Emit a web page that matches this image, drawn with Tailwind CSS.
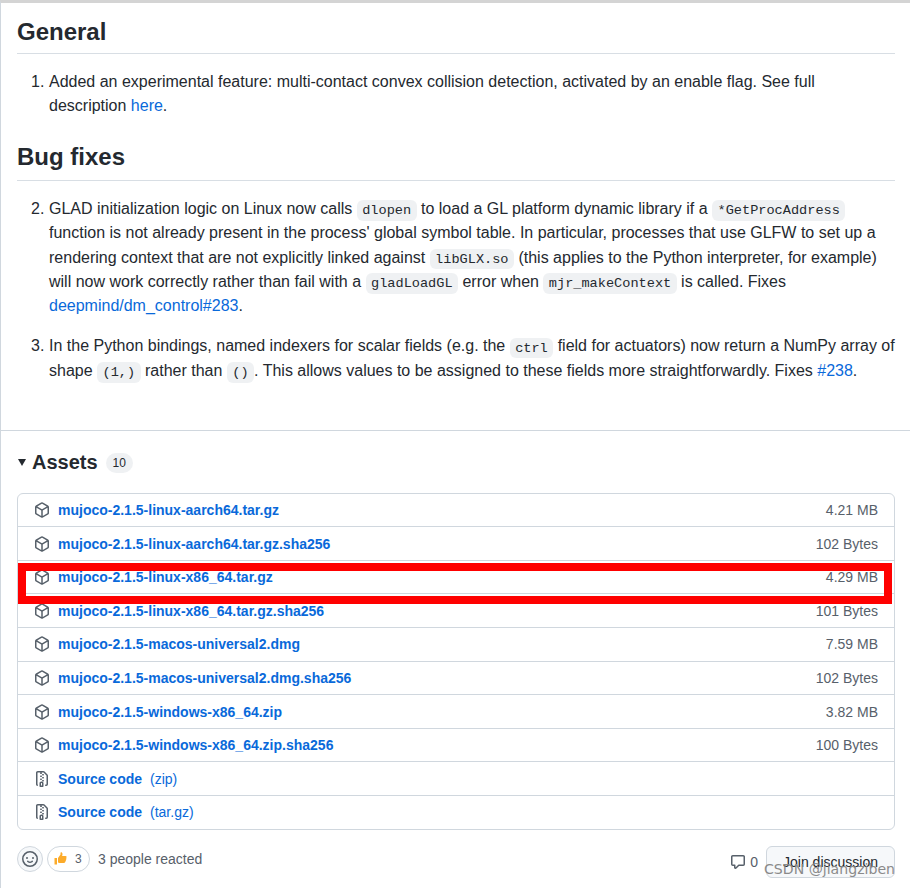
<!DOCTYPE html>
<html lang="en">
<head>
<meta charset="UTF-8">
<title>MuJoCo release</title>
<script src="https://cdn.jsdelivr.net/npm/@tailwindcss/browser@4"></script>
</head>
<body class="bg-white">
<div class="relative w-[910px] h-[888px] overflow-hidden font-['Liberation_Sans',sans-serif] text-[#24292f] text-base leading-6">
  <div class="h-[888px] border-t-[3px] border-t-[#d4d4d4] border-l border-l-[#d0d7de]">
    <div class="pl-4 pr-[15px]">
      <h2 class="mt-[14px] h-[37px] border-b border-[#d8dee4] text-2xl leading-[30px] font-semibold">General</h2>
      <ol class="mt-4 pl-8">
        <li class="relative"><span class="absolute -left-[18px]">1.</span>Added an experimental feature: multi-contact convex collision detection, activated by an enable flag. See full description <a class="text-[#0969da]">here</a>.</li>
      </ol>
      <h2 class="mt-6 h-[39px] border-b border-[#d8dee4] text-2xl leading-[30px] font-semibold">Bug fixes</h2>
      <ol class="mt-4 pl-8 leading-[24.3px]">
        <li class="relative"><span class="absolute -left-[18px]">2.</span>GLAD initialization logic on Linux now calls <code class="rounded-md bg-[#afb8c1]/20 px-[5.44px] py-[2.72px] font-['Liberation_Mono',monospace] text-[13.6px] leading-none">dlopen</code> to load a GL platform dynamic library if a <code class="rounded-md bg-[#afb8c1]/20 px-[5.44px] py-[2.72px] font-['Liberation_Mono',monospace] text-[13.6px] leading-none">*GetProcAddress</code> function is not already present in the process' global symbol table. In particular, processes that use GLFW to set up a rendering context that are not explicitly linked against <code class="rounded-md bg-[#afb8c1]/20 px-[5.44px] py-[2.72px] font-['Liberation_Mono',monospace] text-[13.6px] leading-none">libGLX.so</code> (this applies to the Python interpreter, for example) will now work correctly rather than fail with a <code class="rounded-md bg-[#afb8c1]/20 px-[5.44px] py-[2.72px] font-['Liberation_Mono',monospace] text-[13.6px] leading-none">gladLoadGL</code> error when <code class="rounded-md bg-[#afb8c1]/20 px-[5.44px] py-[2.72px] font-['Liberation_Mono',monospace] text-[13.6px] leading-none">mjr_makeContext</code> is called. Fixes <a class="text-[#0969da]">deepmind/dm_control#283</a>.</li>
        <li class="relative mt-4"><span class="absolute -left-[18px]">3.</span>In the Python bindings, named indexers for scalar fields (e.g. the <code class="rounded-md bg-[#afb8c1]/20 px-[5.44px] py-[2.72px] font-['Liberation_Mono',monospace] text-[13.6px] leading-none">ctrl</code> field for actuators) now return a NumPy array of shape <code class="rounded-md bg-[#afb8c1]/20 px-[5.44px] py-[2.72px] font-['Liberation_Mono',monospace] text-[13.6px] leading-none">(1,)</code> rather than <code class="rounded-md bg-[#afb8c1]/20 px-[5.44px] py-[2.72px] font-['Liberation_Mono',monospace] text-[13.6px] leading-none">()</code>. This allows values to be assigned to these fields more straightforwardly. Fixes <a class="text-[#0969da]">#238</a>.</li>
      </ol>
    </div>
    <div class="mt-[46.9px] border-t border-[#d0d7de] pl-4 pr-[15px]">
      <div class="mt-[18px] flex h-[26px] items-center">
        <svg class="ml-px mr-[6px] mt-px" width="8" height="8" viewBox="0 0 8 8"><path d="M0 1h8L4 8z" fill="#24292f"/></svg>
        <span class="text-xl leading-[26px] font-semibold">Assets</span>
        <span class="ml-2 mt-[3px] rounded-full bg-[#afb8c1]/20 px-[7px] text-xs leading-[20px]">10</span>
      </div>
      <div class="mt-[18px] rounded-md border border-[#d0d7de] text-sm leading-5">
        <div class="flex h-[32.3px] items-center justify-between pb-px pl-4 pr-4">
          <div class="flex items-center gap-2"><svg class="text-[#57606a]" width="16" height="16" viewBox="0 0 16 16" fill="currentColor"><path d="m8.878.392 5.25 3.045c.54.314.872.89.872 1.514v6.098a1.75 1.75 0 0 1-.872 1.514l-5.25 3.045a1.75 1.75 0 0 1-1.756 0l-5.25-3.045A1.75 1.75 0 0 1 1 11.049V4.951c0-.624.332-1.201.872-1.514L7.122.392a1.75 1.75 0 0 1 1.756 0ZM7.875 1.69l-4.63 2.685L8 7.133l4.755-2.758-4.63-2.685a.248.248 0 0 0-.25 0ZM2.5 5.677v5.372c0 .09.047.171.125.216l4.625 2.683V8.432Zm6.25 8.271 4.625-2.683a.25.25 0 0 0 .125-.216V5.677L8.75 8.432Z"/></svg><a class="font-bold text-[#0969da]">mujoco-2.1.5-linux-aarch64.tar.gz</a></div>
          <span class="text-[#57606a]">4.21 MB</span>
        </div>
        <div class="flex h-[33.6px] items-center justify-between border-t border-[#d0d7de] pl-4 pr-4">
          <div class="flex items-center gap-2"><svg class="text-[#57606a]" width="16" height="16" viewBox="0 0 16 16" fill="currentColor"><path d="m8.878.392 5.25 3.045c.54.314.872.89.872 1.514v6.098a1.75 1.75 0 0 1-.872 1.514l-5.25 3.045a1.75 1.75 0 0 1-1.756 0l-5.25-3.045A1.75 1.75 0 0 1 1 11.049V4.951c0-.624.332-1.201.872-1.514L7.122.392a1.75 1.75 0 0 1 1.756 0ZM7.875 1.69l-4.63 2.685L8 7.133l4.755-2.758-4.63-2.685a.248.248 0 0 0-.25 0ZM2.5 5.677v5.372c0 .09.047.171.125.216l4.625 2.683V8.432Zm6.25 8.271 4.625-2.683a.25.25 0 0 0 .125-.216V5.677L8.75 8.432Z"/></svg><a class="font-bold text-[#0969da]">mujoco-2.1.5-linux-aarch64.tar.gz.sha256</a></div>
          <span class="text-[#57606a]">102 Bytes</span>
        </div>
        <div class="flex h-[33.6px] items-center justify-between border-t border-[#d0d7de] pl-4 pr-4">
          <div class="flex items-center gap-2"><svg class="text-[#57606a]" width="16" height="16" viewBox="0 0 16 16" fill="currentColor"><path d="m8.878.392 5.25 3.045c.54.314.872.89.872 1.514v6.098a1.75 1.75 0 0 1-.872 1.514l-5.25 3.045a1.75 1.75 0 0 1-1.756 0l-5.25-3.045A1.75 1.75 0 0 1 1 11.049V4.951c0-.624.332-1.201.872-1.514L7.122.392a1.75 1.75 0 0 1 1.756 0ZM7.875 1.69l-4.63 2.685L8 7.133l4.755-2.758-4.63-2.685a.248.248 0 0 0-.25 0ZM2.5 5.677v5.372c0 .09.047.171.125.216l4.625 2.683V8.432Zm6.25 8.271 4.625-2.683a.25.25 0 0 0 .125-.216V5.677L8.75 8.432Z"/></svg><a class="font-bold text-[#0969da]">mujoco-2.1.5-linux-x86_64.tar.gz</a></div>
          <span class="text-[#57606a]">4.29 MB</span>
        </div>
        <div class="flex h-[33.6px] items-center justify-between border-t border-[#d0d7de] pl-4 pr-4">
          <div class="flex items-center gap-2"><svg class="text-[#57606a]" width="16" height="16" viewBox="0 0 16 16" fill="currentColor"><path d="m8.878.392 5.25 3.045c.54.314.872.89.872 1.514v6.098a1.75 1.75 0 0 1-.872 1.514l-5.25 3.045a1.75 1.75 0 0 1-1.756 0l-5.25-3.045A1.75 1.75 0 0 1 1 11.049V4.951c0-.624.332-1.201.872-1.514L7.122.392a1.75 1.75 0 0 1 1.756 0ZM7.875 1.69l-4.63 2.685L8 7.133l4.755-2.758-4.63-2.685a.248.248 0 0 0-.25 0ZM2.5 5.677v5.372c0 .09.047.171.125.216l4.625 2.683V8.432Zm6.25 8.271 4.625-2.683a.25.25 0 0 0 .125-.216V5.677L8.75 8.432Z"/></svg><a class="font-bold text-[#0969da]">mujoco-2.1.5-linux-x86_64.tar.gz.sha256</a></div>
          <span class="text-[#57606a]">101 Bytes</span>
        </div>
        <div class="flex h-[33.6px] items-center justify-between border-t border-[#d0d7de] pl-4 pr-4">
          <div class="flex items-center gap-2"><svg class="text-[#57606a]" width="16" height="16" viewBox="0 0 16 16" fill="currentColor"><path d="m8.878.392 5.25 3.045c.54.314.872.89.872 1.514v6.098a1.75 1.75 0 0 1-.872 1.514l-5.25 3.045a1.75 1.75 0 0 1-1.756 0l-5.25-3.045A1.75 1.75 0 0 1 1 11.049V4.951c0-.624.332-1.201.872-1.514L7.122.392a1.75 1.75 0 0 1 1.756 0ZM7.875 1.69l-4.63 2.685L8 7.133l4.755-2.758-4.63-2.685a.248.248 0 0 0-.25 0ZM2.5 5.677v5.372c0 .09.047.171.125.216l4.625 2.683V8.432Zm6.25 8.271 4.625-2.683a.25.25 0 0 0 .125-.216V5.677L8.75 8.432Z"/></svg><a class="font-bold text-[#0969da]">mujoco-2.1.5-macos-universal2.dmg</a></div>
          <span class="text-[#57606a]">7.59 MB</span>
        </div>
        <div class="flex h-[33.6px] items-center justify-between border-t border-[#d0d7de] pl-4 pr-4">
          <div class="flex items-center gap-2"><svg class="text-[#57606a]" width="16" height="16" viewBox="0 0 16 16" fill="currentColor"><path d="m8.878.392 5.25 3.045c.54.314.872.89.872 1.514v6.098a1.75 1.75 0 0 1-.872 1.514l-5.25 3.045a1.75 1.75 0 0 1-1.756 0l-5.25-3.045A1.75 1.75 0 0 1 1 11.049V4.951c0-.624.332-1.201.872-1.514L7.122.392a1.75 1.75 0 0 1 1.756 0ZM7.875 1.69l-4.63 2.685L8 7.133l4.755-2.758-4.63-2.685a.248.248 0 0 0-.25 0ZM2.5 5.677v5.372c0 .09.047.171.125.216l4.625 2.683V8.432Zm6.25 8.271 4.625-2.683a.25.25 0 0 0 .125-.216V5.677L8.75 8.432Z"/></svg><a class="font-bold text-[#0969da]">mujoco-2.1.5-macos-universal2.dmg.sha256</a></div>
          <span class="text-[#57606a]">102 Bytes</span>
        </div>
        <div class="flex h-[33.6px] items-center justify-between border-t border-[#d0d7de] pl-4 pr-4">
          <div class="flex items-center gap-2"><svg class="text-[#57606a]" width="16" height="16" viewBox="0 0 16 16" fill="currentColor"><path d="m8.878.392 5.25 3.045c.54.314.872.89.872 1.514v6.098a1.75 1.75 0 0 1-.872 1.514l-5.25 3.045a1.75 1.75 0 0 1-1.756 0l-5.25-3.045A1.75 1.75 0 0 1 1 11.049V4.951c0-.624.332-1.201.872-1.514L7.122.392a1.75 1.75 0 0 1 1.756 0ZM7.875 1.69l-4.63 2.685L8 7.133l4.755-2.758-4.63-2.685a.248.248 0 0 0-.25 0ZM2.5 5.677v5.372c0 .09.047.171.125.216l4.625 2.683V8.432Zm6.25 8.271 4.625-2.683a.25.25 0 0 0 .125-.216V5.677L8.75 8.432Z"/></svg><a class="font-bold text-[#0969da]">mujoco-2.1.5-windows-x86_64.zip</a></div>
          <span class="text-[#57606a]">3.82 MB</span>
        </div>
        <div class="flex h-[33.6px] items-center justify-between border-t border-[#d0d7de] pl-4 pr-4">
          <div class="flex items-center gap-2"><svg class="text-[#57606a]" width="16" height="16" viewBox="0 0 16 16" fill="currentColor"><path d="m8.878.392 5.25 3.045c.54.314.872.89.872 1.514v6.098a1.75 1.75 0 0 1-.872 1.514l-5.25 3.045a1.75 1.75 0 0 1-1.756 0l-5.25-3.045A1.75 1.75 0 0 1 1 11.049V4.951c0-.624.332-1.201.872-1.514L7.122.392a1.75 1.75 0 0 1 1.756 0ZM7.875 1.69l-4.63 2.685L8 7.133l4.755-2.758-4.63-2.685a.248.248 0 0 0-.25 0ZM2.5 5.677v5.372c0 .09.047.171.125.216l4.625 2.683V8.432Zm6.25 8.271 4.625-2.683a.25.25 0 0 0 .125-.216V5.677L8.75 8.432Z"/></svg><a class="font-bold text-[#0969da]">mujoco-2.1.5-windows-x86_64.zip.sha256</a></div>
          <span class="text-[#57606a]">100 Bytes</span>
        </div>
        <div class="flex h-[33.6px] items-center border-t border-[#d0d7de] pl-4 pr-4">
          <div class="flex items-center gap-2"><svg class="text-[#57606a]" width="16" height="16" viewBox="0 0 16 16" fill="currentColor"><path d="M3.5 1.75v11.5c0 .09.048.173.126.217a.75.75 0 0 1-.752 1.298A1.748 1.748 0 0 1 2 13.25V1.75C2 .784 2.784 0 3.75 0h5.586c.464 0 .909.185 1.237.513l2.914 2.914c.329.328.513.773.513 1.237v8.586A1.75 1.75 0 0 1 12.25 15h-.5a.75.75 0 0 1 0-1.5h.5a.25.25 0 0 0 .25-.25V4.664a.25.25 0 0 0-.073-.177L9.513 1.573a.25.25 0 0 0-.177-.073H7.25a.75.75 0 0 1 0 1.5h-.5a.75.75 0 0 1 0-1.5h-3a.25.25 0 0 0-.25.25Zm3.75 8.75h.5c.966 0 1.75.784 1.75 1.75v3a.75.75 0 0 1-.75.75h-2.5a.75.75 0 0 1-.75-.75v-3c0-.966.784-1.75 1.75-1.75ZM6 5.25a.75.75 0 0 1 .75-.75h.5a.75.75 0 0 1 0 1.5h-.5A.75.75 0 0 1 6 5.25Zm.75 2.25h.5a.75.75 0 0 1 0 1.5h-.5a.75.75 0 0 1 0-1.5ZM8 6.75A.75.75 0 0 1 8.75 6h.5a.75.75 0 0 1 0 1.5h-.5A.75.75 0 0 1 8 6.75ZM8.75 3h.5a.75.75 0 0 1 0 1.5h-.5a.75.75 0 0 1 0-1.5ZM8 9.75A.75.75 0 0 1 8.75 9h.5a.75.75 0 0 1 0 1.5h-.5A.75.75 0 0 1 8 9.75Zm-1 2.5v2.25h1v-2.25a.25.25 0 0 0-.25-.25h-.5a.25.25 0 0 0-.25.25Z"/></svg><a class="font-bold text-[#0969da]">Source code</a><a class="text-[#0969da]">(zip)</a></div>
        </div>
        <div class="flex h-[33.6px] items-center border-t border-[#d0d7de] pl-4 pr-4">
          <div class="flex items-center gap-2"><svg class="text-[#57606a]" width="16" height="16" viewBox="0 0 16 16" fill="currentColor"><path d="M3.5 1.75v11.5c0 .09.048.173.126.217a.75.75 0 0 1-.752 1.298A1.748 1.748 0 0 1 2 13.25V1.75C2 .784 2.784 0 3.75 0h5.586c.464 0 .909.185 1.237.513l2.914 2.914c.329.328.513.773.513 1.237v8.586A1.75 1.75 0 0 1 12.25 15h-.5a.75.75 0 0 1 0-1.5h.5a.25.25 0 0 0 .25-.25V4.664a.25.25 0 0 0-.073-.177L9.513 1.573a.25.25 0 0 0-.177-.073H7.25a.75.75 0 0 1 0 1.5h-.5a.75.75 0 0 1 0-1.5h-3a.25.25 0 0 0-.25.25Zm3.75 8.75h.5c.966 0 1.75.784 1.75 1.75v3a.75.75 0 0 1-.75.75h-2.5a.75.75 0 0 1-.75-.75v-3c0-.966.784-1.75 1.75-1.75ZM6 5.25a.75.75 0 0 1 .75-.75h.5a.75.75 0 0 1 0 1.5h-.5A.75.75 0 0 1 6 5.25Zm.75 2.25h.5a.75.75 0 0 1 0 1.5h-.5a.75.75 0 0 1 0-1.5ZM8 6.75A.75.75 0 0 1 8.75 6h.5a.75.75 0 0 1 0 1.5h-.5A.75.75 0 0 1 8 6.75ZM8.75 3h.5a.75.75 0 0 1 0 1.5h-.5a.75.75 0 0 1 0-1.5ZM8 9.75A.75.75 0 0 1 8.75 9h.5a.75.75 0 0 1 0 1.5h-.5A.75.75 0 0 1 8 9.75Zm-1 2.5v2.25h1v-2.25a.25.25 0 0 0-.25-.25h-.5a.25.25 0 0 0-.25.25Z"/></svg><a class="font-bold text-[#0969da]">Source code</a><a class="text-[#0969da]">(tar.gz)</a></div>
        </div>
      </div>
      <div class="mt-4 flex items-start justify-between">
        <div class="flex items-center text-sm text-[#57606a]">
          <span class="flex h-[26px] w-[26px] items-center justify-center rounded-full border border-[#d0d7de] bg-[#f6f8fa]"><svg width="16" height="16" viewBox="0 0 16 16" fill="#57606a"><path d="M8 0a8 8 0 1 1 0 16A8 8 0 0 1 8 0ZM1.5 8a6.5 6.5 0 1 0 13 0 6.5 6.5 0 0 0-13 0Zm3.82 1.636a.75.75 0 0 1 1.038.175l.007.009c.103.118.22.222.35.31.264.178.683.37 1.285.37.602 0 1.02-.192 1.285-.371.13-.088.247-.192.35-.31l.007-.008a.75.75 0 0 1 1.222.87l-.022-.015c.02.013.021.015.021.015v.001l-.001.002-.002.003-.005.007-.014.019a2.066 2.066 0 0 1-.184.213c-.16.166-.338.316-.53.445-.63.418-1.37.638-2.127.629-.946 0-1.652-.308-2.126-.63a3.331 3.331 0 0 1-.715-.657l-.014-.02-.005-.006-.002-.003v-.002h-.001l.613-.432-.614.43a.75.75 0 0 1 .183-1.044ZM12 7a1 1 0 1 1-2 0 1 1 0 0 1 2 0ZM5 8a1 1 0 1 1 0-2 1 1 0 0 1 0 2Z"/></svg></span>
          <span class="ml-1 flex h-[26px] w-[43px] items-center gap-[8px] rounded-full border border-[#d0d7de] pl-[6px] text-xs"><svg width="13" height="13" viewBox="0 0 13 13"><path d="M0.5 6h2.5v6.5h-2.5zM4 6l2.5-3.5V0.8c0-.8 2-.8 2 1.2 0 1-.4 2-.4 2h3.4c1.4 0 1.4 1.6.6 2 .6.6.4 1.6-.3 1.9.3.8 0 1.500-.6 1.700.2.9-.4 1.400-1.200 1.400H6c-1 0-2-.5-2-.5z" fill="#fcab2a"/></svg>3</span>
          <span class="ml-2">3 people reacted</span>
        </div>
        <div class="flex items-center text-sm text-[#57606a]">
          <svg width="16" height="16" viewBox="0 0 16 16" fill="#57606a"><path d="M1 2.75C1 1.784 1.784 1 2.75 1h10.5c.966 0 1.750.784 1.750 1.750v7.5A1.750 1.750 0 0 1 13.25 12H9.06l-2.573 2.573A1.458 1.458 0 0 1 4 13.543V12H2.75A1.750 1.750 0 0 1 1 10.25Zm1.750-.25a.25.25 0 0 0-.25.25v7.5c0 .138.112.25.25.25h2a.75.75 0 0 1 .75.75v2.19l2.72-2.72a.749.749 0 0 1 .53-.22h4.500a.25.25 0 0 0 .25-.25v-7.5a.25.25 0 0 0-.25-.25Z"/></svg>
          <span class="ml-1">0</span>
          <span class="ml-2 flex h-8 w-[129px] items-center justify-center rounded-md border border-[#d0d7de] bg-[#f6f8fa] text-[#24292f]">Join discussion</span>
        </div>
      </div>
    </div>
  </div>
  <div class="absolute left-[18px] top-[563px] h-[41px] w-[874px] border-8 border-[#ff0000]"></div>
  <div class="absolute right-[15px] top-[860px] font-['DejaVu_Sans',sans-serif] text-[14.1px] leading-[18px] text-[#8a8a8a]">CSDN @jiangziben</div>
</div>
</body>
</html>
